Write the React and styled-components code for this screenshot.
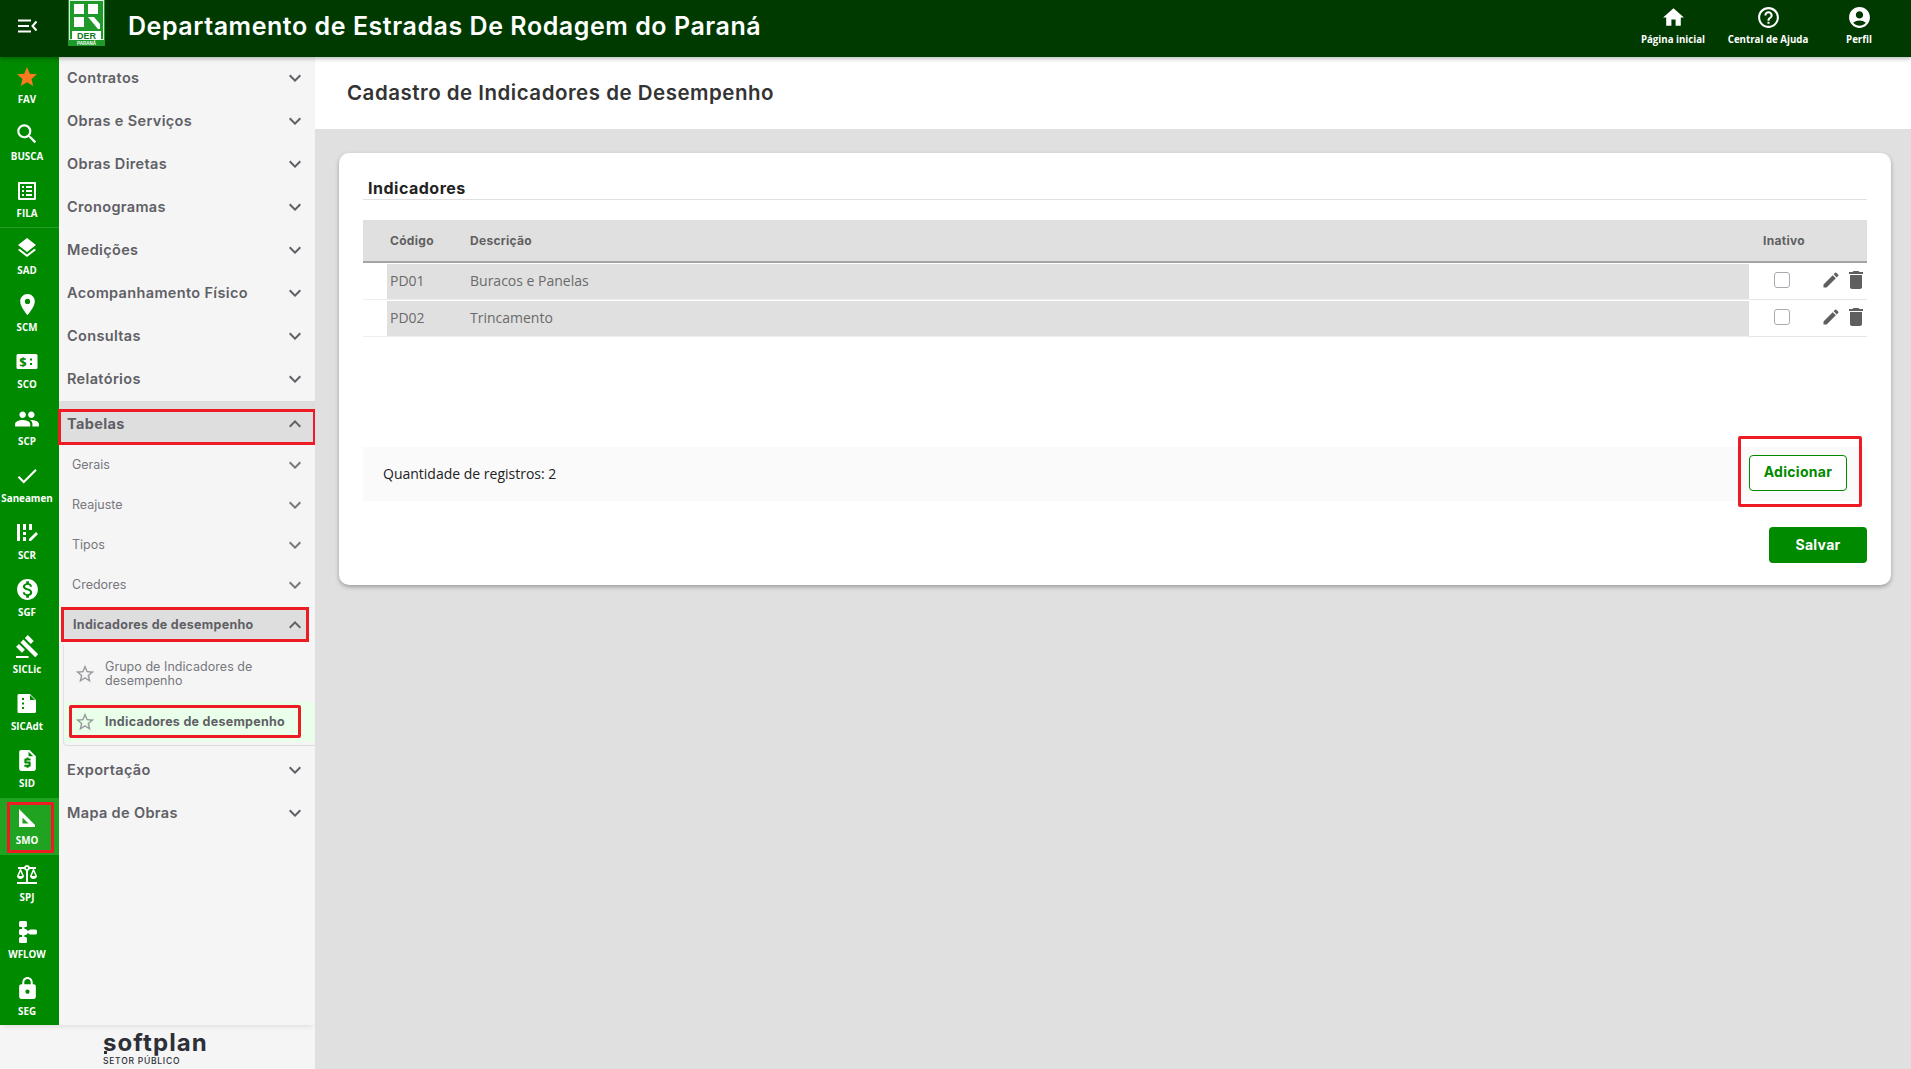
import React from 'react'
import styled, { createGlobalStyle } from 'styled-components'
import {
  MdStar,
  MdSearch,
  MdListAlt,
  MdLayers,
  MdPlace,
  MdPeople,
  MdCheck,
  MdMonetizationOn,
  MdGavel,
  MdRequestQuote,
  MdBalance,
  MdLock,
  MdHome,
  MdHelpOutline,
  MdAccountCircle,
  MdEdit,
  MdDelete,
  MdKeyboardArrowDown,
  MdKeyboardArrowUp,
  MdStarBorder,
} from 'react-icons/md'

const HEADING_FONT = '"Inter", "Liberation Sans", sans-serif'
const BODY_FONT = '"Open Sans", "Liberation Sans", sans-serif'
const RAIL_GREEN = '#008a00'
const MARK_RED = '#ed1c24'

const GlobalStyle = createGlobalStyle`
  html, body {
    margin: 0;
    padding: 0;
    height: 100%;
    overflow: hidden;
    background: #e0e0e0;
  }
  * { box-sizing: border-box; }
`

const SetSquare = () => (
  <svg width="20" height="20" viewBox="0 0 20 20" fill="#fff">
    <path fillRule="evenodd" d="M2 1l16 16v2H2V1zm3.5 8.5V15.5h6z" />
  </svg>
)

const Flow = () => (
  <svg width="20" height="24" viewBox="0 0 20 24" fill="#fff">
    <rect x="2" y="1" width="8" height="6" rx="1.5" />
    <rect x="2" y="9" width="8" height="6" rx="1.5" />
    <rect x="2" y="17" width="8" height="6" rx="1.5" />
    <rect x="5" y="5" width="2.5" height="14" />
    <rect x="9" y="10.5" width="4" height="3" />
    <rect x="12" y="9.5" width="8" height="5" rx="1.5" />
  </svg>
)

const Rules = () => (
  <svg width="22" height="20" viewBox="0 0 22 20" fill="#fff">
    <rect x="1" y="1" width="3" height="17" />
    <rect x="7" y="1" width="3" height="6" />
    <rect x="7" y="9" width="3" height="3" />
    <rect x="7" y="14" width="3" height="4" />
    <rect x="13" y="1" width="3" height="6" />
    <path d="M13 16l7-7 2 2-7 7h-2z" />
  </svg>
)

const CashCard = () => (
  <svg width="22" height="18" viewBox="0 0 22 18">
    <rect x="0.5" y="1" width="21" height="15" rx="1.5" fill="#fff" />
    <text x="7" y="14" textAnchor="middle" fontFamily="Open Sans, sans-serif" fontWeight="700" fontSize="13" fill={RAIL_GREEN}>$</text>
    <rect x="14" y="5.5" width="2" height="2" fill={RAIL_GREEN} />
    <rect x="14" y="10" width="2" height="2" fill={RAIL_GREEN} />
  </svg>
)

const DocDots = () => (
  <svg width="20" height="19" viewBox="0 0 20 19">
    <path fill="#fff" d="M2 0h11l6 6v11.5a1.5 1.5 0 0 1-1.5 1.5H2a1.5 1.5 0 0 1-1.5-1.5V1.5A1.5 1.5 0 0 1 2 0z" />
    <path fill={RAIL_GREEN} d="M13 1l5 5h-5z" />
    <rect fill={RAIL_GREEN} x="5" y="4" width="2" height="2" />
    <rect fill={RAIL_GREEN} x="5" y="8.5" width="2" height="2" />
    <rect fill={RAIL_GREEN} x="5" y="13" width="2" height="2" />
  </svg>
)

const MenuToggle = () => (
  <svg width="20" height="14" viewBox="0 0 20 14" fill="none" stroke="#fff" strokeWidth="2">
    <path d="M0 1.5h13M0 7h11M0 12.5h13M18.5 2.5L14.5 7l4 4.5" />
  </svg>
)

const DerLogo = () => (
  <svg width="37" height="46" viewBox="0 0 37 46">
    <rect width="37" height="46" fill="#1f9a2a" />
    <rect x="1.5" y="0.5" width="34" height="39" fill="none" stroke="#dff3df" strokeWidth="1" />
    <rect x="6" y="4" width="10" height="10" fill="#fff" />
    <rect x="20" y="4" width="10" height="10" fill="#fff" />
    <rect x="6" y="17" width="10" height="10" fill="#fff" />
    <path d="M20 17h6l6 7v5h-2z" fill="#fff" />
    <rect x="4" y="31" width="29" height="9" fill="#fff" />
    <text x="18.5" y="39" textAnchor="middle" fontFamily="Liberation Sans, sans-serif" fontWeight="700" fontSize="9" fill="#147a20">DER</text>
    <text x="18.5" y="45" textAnchor="middle" fontFamily="Liberation Sans, sans-serif" fontWeight="700" fontSize="4.5" fill="#fff">PARANÁ</text>
  </svg>
)

const railItems = [
  { label: 'FAV', icon: <MdStar size={24} color="#f97a1f" /> },
  { label: 'BUSCA', icon: <MdSearch size={26} /> },
  { label: 'FILA', icon: <MdListAlt size={24} />, divider: true },
  { label: 'SAD', icon: <MdLayers size={24} /> },
  { label: 'SCM', icon: <MdPlace size={25} /> },
  { label: 'SCO', icon: <CashCard /> },
  { label: 'SCP', icon: <MdPeople size={26} /> },
  { label: 'Saneamen', icon: <MdCheck size={26} /> },
  { label: 'SCR', icon: <Rules /> },
  { label: 'SGF', icon: <MdMonetizationOn size={25} /> },
  { label: 'SICLic', icon: <MdGavel size={25} /> },
  { label: 'SICAdt', icon: <DocDots /> },
  { label: 'SID', icon: <MdRequestQuote size={25} /> },
  { label: 'SMO', icon: <SetSquare />, active: true },
  { label: 'SPJ', icon: <MdBalance size={24} /> },
  { label: 'WFLOW', icon: <Flow /> },
  { label: 'SEG', icon: <MdLock size={25} /> },
]

const topMenus = [
  'Contratos',
  'Obras e Serviços',
  'Obras Diretas',
  'Cronogramas',
  'Medições',
  'Acompanhamento Físico',
  'Consultas',
  'Relatórios',
]

const subMenus = ['Gerais', 'Reajuste', 'Tipos', 'Credores']

const records = [
  { code: 'PD01', description: 'Buracos e Panelas' },
  { code: 'PD02', description: 'Trincamento' },
]

export default function App() {
  return (
    <Page>
      <GlobalStyle />
      <Header>
        <ToggleSlot>
          <MenuToggle />
        </ToggleSlot>
        <LogoSlot>
          <DerLogo />
        </LogoSlot>
        <AppTitle>Departamento de Estradas De Rodagem do Paraná</AppTitle>
        <HeaderActions>
          <HeaderAction $width={96}>
            <MdHome size={25} />
            <span>Página inicial</span>
          </HeaderAction>
          <HeaderAction $width={94}>
            <MdHelpOutline size={25} />
            <span>Central de Ajuda</span>
          </HeaderAction>
          <HeaderAction $width={88}>
            <MdAccountCircle size={25} />
            <span>Perfil</span>
          </HeaderAction>
        </HeaderActions>
      </Header>

      <Body>
        <Aside>
          <Nav>
            <Rail>
              {railItems.map((item) => (
                <RailItem key={item.label} $active={item.active} $divider={item.divider}>
                  <RailMark $active={item.active}>
                    <RailIcon>{item.icon}</RailIcon>
                    <RailLabel>{item.label}</RailLabel>
                  </RailMark>
                </RailItem>
              ))}
            </Rail>
            <Menu>
              {topMenus.map((name) => (
                <MenuRow key={name}>
                  <span>{name}</span>
                  <MdKeyboardArrowDown size={24} />
                </MenuRow>
              ))}
              <OpenGroup>
                <OpenRow>
                  <span>Tabelas</span>
                  <MdKeyboardArrowUp size={24} />
                </OpenRow>
                <SubList>
                  {subMenus.map((name) => (
                    <SubRow key={name}>
                      <span>{name}</span>
                      <MdKeyboardArrowDown size={24} />
                    </SubRow>
                  ))}
                  <SubHead>
                    <span>Indicadores de desempenho</span>
                    <MdKeyboardArrowUp size={24} />
                  </SubHead>
                  <LeafList>
                    <Leaf>
                      <MdStarBorder size={22} />
                      <span>Grupo de Indicadores de desempenho</span>
                    </Leaf>
                    <SelectedLeaf>
                      <MdStarBorder size={22} />
                      <span>Indicadores de desempenho</span>
                    </SelectedLeaf>
                  </LeafList>
                </SubList>
              </OpenGroup>
              <MenuRow>
                <span>Exportação</span>
                <MdKeyboardArrowDown size={24} />
              </MenuRow>
              <MenuRow>
                <span>Mapa de Obras</span>
                <MdKeyboardArrowDown size={24} />
              </MenuRow>
            </Menu>
          </Nav>
          <Brand>
            <BrandName>softplan</BrandName>
            <BrandSub>SETOR PÚBLICO</BrandSub>
          </Brand>
        </Aside>

        <Main>
          <TitleBar>
            <h1>Cadastro de Indicadores de Desempenho</h1>
          </TitleBar>
          <Content>
            <Card>
              <CardTitle>Indicadores</CardTitle>
              <Table>
                <thead>
                  <tr>
                    <HeadCell $width={107} $pad={27}>Código</HeadCell>
                    <HeadCell>Descrição</HeadCell>
                    <HeadCell $width={68} $pad={14}>Inativo</HeadCell>
                    <HeadCell $width={50} />
                  </tr>
                </thead>
                <tbody>
                  {records.map((record) => (
                    <tr key={record.code}>
                      <CodeCell>{record.code}</CodeCell>
                      <TextCell>{record.description}</TextCell>
                      <ActionCell>
                        <Checkbox />
                      </ActionCell>
                      <ActionCell>
                        <RowIcons>
                          <MdEdit size={20} />
                          <MdDelete size={24} />
                        </RowIcons>
                      </ActionCell>
                    </tr>
                  ))}
                </tbody>
              </Table>
              <CountBar>
                <span>Quantidade de registros: 2</span>
                <AddSlot>
                  <AddButton>Adicionar</AddButton>
                </AddSlot>
              </CountBar>
              <SaveRow>
                <SaveButton>Salvar</SaveButton>
              </SaveRow>
            </Card>
          </Content>
        </Main>
      </Body>
    </Page>
  )
}

const Page = styled.div`
  width: 100%;
  height: 100vh;
  display: flex;
  flex-direction: column;
  overflow: hidden;
`

const Header = styled.header`
  height: 57px;
  flex: none;
  display: flex;
  align-items: center;
  background: #003a00;
  color: #fff;
  position: relative;
  z-index: 3;
  box-shadow: 0 2px 4px rgba(0, 0, 0, 0.25);
`

const ToggleSlot = styled.div`
  width: 59px;
  padding: 0 0 6px 18px;
  display: flex;
`

const LogoSlot = styled.div`
  width: 69px;
  height: 57px;
  padding-left: 9px;
  display: flex;
  align-items: flex-start;
`

const AppTitle = styled.div`
  font-family: ${HEADING_FONT};
  font-size: 25px;
  font-weight: 600;
  letter-spacing: 0.55px;
  padding-bottom: 5px;
`

const HeaderActions = styled.div`
  margin-left: auto;
  margin-right: 8px;
  display: flex;
  padding-bottom: 6px;
`

const HeaderAction = styled.div`
  width: ${(p) => p.$width}px;
  display: flex;
  flex-direction: column;
  align-items: center;
  font-family: ${BODY_FONT};
  font-size: 9.7px;
  font-weight: 700;
  white-space: nowrap;

  svg {
    margin-bottom: 3px;
  }
`

const Body = styled.div`
  flex: 1;
  min-height: 0;
  display: flex;
`

const Aside = styled.aside`
  width: 315px;
  flex: none;
  display: flex;
  flex-direction: column;
  background: #f5f5f5;
`

const Nav = styled.div`
  flex: 1;
  min-height: 0;
  display: flex;
  box-shadow: 0 3px 6px -3px rgba(0, 0, 0, 0.15);
`

const Rail = styled.div`
  width: 59px;
  flex: none;
  background: ${RAIL_GREEN};
`

const RailItem = styled.div`
  height: 57px;
  background: ${(p) => (p.$active ? '#20a320' : 'transparent')};
  border-bottom: ${(p) => (p.$divider ? '1px solid #2a9a2a' : 'none')};
  padding: 4px 0 2px;
`

const RailMark = styled.div`
  height: 51px;
  margin: 0 5px 0 7px;
  padding: 2px 7px 0 0;
  display: flex;
  flex-direction: column;
  align-items: center;
  box-shadow: ${(p) => (p.$active ? `inset 0 0 0 3px ${MARK_RED}` : 'none')};
`

const RailIcon = styled.div`
  height: 27px;
  display: flex;
  align-items: center;
  justify-content: center;
  color: #fff;
`

const RailLabel = styled.div`
  margin-top: 3px;
  font-family: ${BODY_FONT};
  font-size: 9.8px;
  font-weight: 700;
  line-height: 14px;
  color: #fff;
  white-space: nowrap;
`

const Menu = styled.nav`
  flex: 1;
  min-width: 0;
`

const MenuRow = styled.div`
  height: 43px;
  display: flex;
  align-items: center;
  justify-content: space-between;
  padding: 0 8px 1px 8px;
  font-family: ${HEADING_FONT};
  font-size: 14.5px;
  font-weight: 600;
  letter-spacing: 0.35px;
  color: #5f5f66;

  span {
    margin-bottom: 1px;
  }
`

const OpenGroup = styled.div`
  padding-top: 9px;
  background: linear-gradient(#dedede 9px, transparent 9px);
`

const OpenRow = styled(MenuRow)`
  height: 34px;
  padding-bottom: 7px;
  font-weight: 700;
  background: #dedede;
  outline: 3px solid ${MARK_RED};
  outline-offset: -2px;
`

const SubList = styled.div`
  padding-top: 1px;
`

const SubRow = styled.div`
  height: 40px;
  display: flex;
  align-items: center;
  justify-content: space-between;
  padding: 0 8px 0 13px;
  font-family: ${HEADING_FONT};
  font-size: 12.5px;
  color: #77777d;

  span {
    margin-bottom: 1px;
  }
`

const SubHead = styled.div`
  height: 33px;
  margin: 3px 7px 0 3px;
  padding: 0 1px 0 11px;
  display: flex;
  align-items: center;
  justify-content: space-between;
  background: #dedede;
  font-family: ${HEADING_FONT};
  font-size: 12.5px;
  font-weight: 700;
  letter-spacing: 0.3px;
  color: #5f5f66;
  outline: 3px solid ${MARK_RED};
  outline-offset: -2px;
`

const LeafList = styled.div`
  margin: 4px 0 3px 4px;
  padding-bottom: 3px;
  border-left: 1px solid #e0e0e0;
  border-bottom: 1px solid #dcdcdc;
  border-radius: 0 0 0 4px;
`

const Leaf = styled.div`
  height: 57px;
  padding-left: 10px;
  display: flex;
  align-items: center;
  gap: 9px;
  font-family: ${HEADING_FONT};
  font-size: 12.5px;
  line-height: 14px;
  letter-spacing: 0.05px;
  color: #77777d;

  svg {
    flex: none;
    color: #9a9aa0;
  }

  span {
    max-width: 165px;
  }
`

const SelectedLeaf = styled(Leaf)`
  height: 40px;
  position: relative;
  font-weight: 700;
  letter-spacing: 0.28px;
  color: #5f5f66;
  background: #eaffea;

  span {
    max-width: none;
    white-space: nowrap;
  }

  &::after {
    content: '';
    position: absolute;
    top: 3px;
    bottom: 4px;
    left: 5px;
    width: 226px;
    border: 3px solid ${MARK_RED};
    border-radius: 2px;
  }
`

const Brand = styled.div`
  height: 44px;
  flex: none;
  padding: 6px 0 0 103px;
`

const BrandName = styled.div`
  position: relative;
  font-family: ${HEADING_FONT};
  font-size: 24px;
  font-weight: 700;
  line-height: 23px;
  letter-spacing: 1.1px;
  color: #2e3038;

  &::before {
    content: '';
    position: absolute;
    left: 1px;
    top: 20px;
    width: 3px;
    height: 3px;
    background: #2e3038;
  }
`

const BrandSub = styled.div`
  margin-top: 1px;
  font-family: ${HEADING_FONT};
  font-size: 8.5px;
  font-weight: 500;
  line-height: 12px;
  letter-spacing: 0.75px;
  color: #2e3038;
`

const Main = styled.main`
  flex: 1;
  min-width: 0;
  display: flex;
  flex-direction: column;
`

const TitleBar = styled.div`
  height: 72px;
  flex: none;
  background: #fff;
  display: flex;
  align-items: center;
  padding: 0 0 1px 32px;

  h1 {
    margin: 0;
    font-family: ${HEADING_FONT};
    font-size: 20.5px;
    font-weight: 600;
    letter-spacing: 0.5px;
    color: #333;
  }
`

const Content = styled.div`
  flex: 1;
  padding: 24px 20px 0 24px;
  background: #e0e0e0;
`

const Card = styled.section`
  height: 432px;
  padding: 24px 24px 0;
  background: #fff;
  border-radius: 10px;
  box-shadow: 0 2px 4px rgba(0, 0, 0, 0.3);
`

const CardTitle = styled.h2`
  margin: 0 0 20px;
  height: 23px;
  padding: 0 0 0 5px;
  font-family: ${HEADING_FONT};
  font-size: 16px;
  font-weight: 700;
  line-height: 22px;
  letter-spacing: 0.5px;
  color: #222;
  border-bottom: 1px solid #e0e0e0;
`

const Table = styled.table`
  width: 100%;
  border-collapse: collapse;
  table-layout: fixed;
`

const HeadCell = styled.th`
  width: ${(p) => (p.$width ? `${p.$width}px` : 'auto')};
  height: 42px;
  padding: 0 0 0 ${(p) => p.$pad || 0}px;
  background: #e0e0e0;
  border-bottom: 2px solid #a4a4a4;
  font-family: ${HEADING_FONT};
  font-size: 12px;
  font-weight: 700;
  letter-spacing: 0.3px;
  text-align: left;
  color: #5f5f5f;
`

const TextCell = styled.td`
  height: 37px;
  padding: 0;
  font-family: ${BODY_FONT};
  font-size: 14px;
  color: #6a6a6a;
  background: #e0e0e0;
  background-clip: padding-box;
  border-bottom: 1px solid #eeeeee;
  box-shadow: inset 0 1px 0 #fff;
`

const CodeCell = styled(TextCell)`
  padding-left: 27px;
  background: linear-gradient(90deg, #fff 24px, #e0e0e0 24px);
  background-clip: padding-box;
`

const ActionCell = styled.td`
  height: 37px;
  padding: 0;
  background: #fff;
  border-bottom: 1px solid #e6e6e6;
`

const Checkbox = styled.div`
  width: 16px;
  height: 16px;
  margin: 0 0 1px 25px;
  border: 1px solid #a9a9b2;
  border-radius: 3px;
  background: #fff;
`

const RowIcons = styled.div`
  display: flex;
  align-items: center;
  justify-content: flex-end;
  gap: 3px;
  margin: 0 -1px 1px 0;
  color: #5f5f5f;
`

const CountBar = styled.div`
  height: 54px;
  margin-top: 110px;
  padding-left: 20px;
  display: flex;
  align-items: center;
  justify-content: space-between;
  background: #fafafa;
  font-family: ${BODY_FONT};
  font-size: 14px;
  color: #222;
`

const AddSlot = styled.div`
  width: 124px;
  height: 71px;
  margin: -11px 5px 0 0;
  padding: 16px 0 0 8px;
  align-self: flex-start;
  border: 3px solid ${MARK_RED};
  border-radius: 2px;
`

const AddButton = styled.button`
  display: block;
  width: 98px;
  height: 36px;
  padding: 0 0 2px;
  background: #fff;
  border: 1px solid ${RAIL_GREEN};
  border-radius: 4px;
  font-family: ${HEADING_FONT};
  font-size: 14px;
  font-weight: 700;
  letter-spacing: 0.3px;
  color: ${RAIL_GREEN};
`

const SaveRow = styled.div`
  margin-top: 26px;
  display: flex;
  justify-content: flex-end;
`

const SaveButton = styled.button`
  width: 98px;
  height: 36px;
  padding: 0;
  background: ${RAIL_GREEN};
  border: none;
  border-radius: 4px;
  font-family: ${HEADING_FONT};
  font-size: 14px;
  font-weight: 700;
  letter-spacing: 0.3px;
  color: #fff;
`
